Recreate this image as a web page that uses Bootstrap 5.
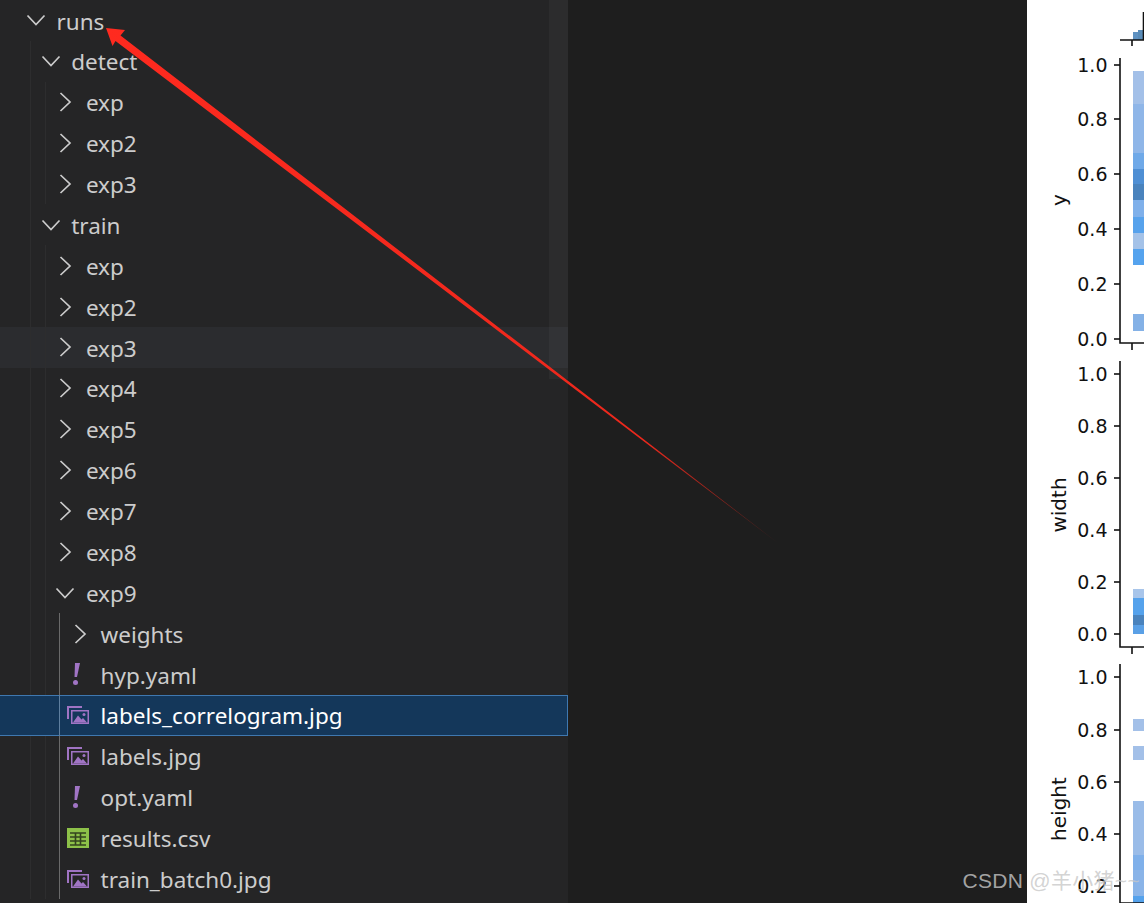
<!DOCTYPE html>
<html lang="en">
  <head>
    <meta charset="UTF-8" />
    <meta name="viewport" content="width=device-width, initial-scale=1.0" />
    <title>runs</title>
    <link href="https://cdn.jsdelivr.net/npm/bootstrap@5.3.2/dist/css/bootstrap.min.css" rel="stylesheet" />
    <style>
      html, body { height: 100%; overflow: hidden; background: #1e1e1e; }
      .shot { height: 903px; }
      .side-tree { width: 568px; background: #252526; font-family: "Noto Sans", sans-serif; font-size: 22.5px; color: #cccccc; }
      .tree-row { height: 40.89px; padding-left: 30px; white-space: nowrap; }
      .tree-row.hovered { background: #2b2c2f; }
      .tree-row.picked { background: #14375a; color: #fff; box-shadow: inset 0 1px 0 #3f78b0, inset 0 -1px 0 #3f78b0, inset -1px 0 0 #3f78b0; }
      .tree-row.picked .guide { border-left-color: transparent; }
      .tree-row.picked .guide.lit { border-left-color: #5f7f9f; }
      .guide { width: 14.7px; height: 100%; flex: none; border-left: 1px solid #2d2d2e; }
      .guide.lit { border-left-color: #6a6a6a; }
      .twistie { width: 26.5px; flex: none; }
      .twistie svg { display: block; margin-left: -4px; }
      .twistie.for-file svg { margin-left: -7px; }
      .row-name { position: relative; top: 1px; }
      .scroll-strip { left: 549px; top: 0; width: 19px; height: 379px; background: rgba(255,255,255,.035); }
      .plot-side { width: 117px; background: #fff; }
      .plot-side text { font-family: "DejaVu Sans", sans-serif; font-size: 19px; fill: #111; }
      .plot-side text.axis-name { font-size: 20px; }
      .arrow-over { left: 0; top: 0; pointer-events: none; }
      .watermark { right: 4px; bottom: 7px; font-family: "Liberation Sans", "Noto Sans CJK SC", sans-serif; font-size: 21px; letter-spacing: .3px; color: rgba(200,200,200,.8); white-space: nowrap; }
    </style>
  </head>
  <body>
    <div class="shot d-flex position-relative overflow-hidden">
      <div id="tree" class="side-tree position-relative flex-shrink-0">
        <div class="scroll-strip position-absolute"></div>
      </div>
      <div class="flex-grow-1"></div>
      <div class="plot-side flex-shrink-0">
        <svg id="plots" width="117" height="903" viewBox="1027 0 117 903" class="d-block"></svg>
      </div>

      <svg class="arrow-over position-absolute" width="1144" height="903">
        <defs>
          <linearGradient id="arrowFade" gradientUnits="userSpaceOnUse" x1="106" y1="28" x2="778" y2="543">
            <stop offset="0" stop-color="#ff2a1f" />
            <stop offset="0.8" stop-color="#ec281c" />
            <stop offset="1" stop-color="#4a1f1c" />
          </linearGradient>
        </defs>
        <path d="M106 28 L125 30 L120.5 35.5 L778 543 L115.5 41 L112.5 46 Z" fill="url(#arrowFade)" />
      </svg>

      <div class="watermark position-absolute">CSDN @羊小猪~~</div>
    </div>

    <script>
      const chevronDown = '<svg width="20" height="20" viewBox="0 0 20 20"><path d="M1.5 5.5 L10 14.5 L18.5 5.5" fill="none" stroke="#cccccc" stroke-width="1.7"/></svg>';
      const chevronRight = '<svg width="20" height="20" viewBox="0 0 20 20"><path d="M5.5 1 L15 10 L5.5 19" fill="none" stroke="#cccccc" stroke-width="1.7"/></svg>';
      const imageIcon = '<svg width="22" height="18" viewBox="0 0 22 18"><path d="M0 0H15V2H2V13H0Z" fill="#a074c4"/><path fill-rule="evenodd" d="M4 4H22V18H4ZM5.5 5.5V16.5H20.5V5.5Z" fill="#a074c4"/><path d="M6 16.5 L11 9.5 L14.5 13.5 L16 12 L20 16.5Z" fill="#a074c4"/><circle cx="17" cy="8.5" r="1.5" fill="#a074c4"/></svg>';
      const yamlIcon = '<svg width="22" height="22" viewBox="0 0 22 22"><path d="M8 0H13L10 14H7.5Z" fill="#a074c4"/><circle cx="8.5" cy="19.5" r="2.5" fill="#a074c4"/></svg>';
      const csvIcon = '<svg width="22" height="20" viewBox="0 0 22 20"><rect width="22" height="20" fill="#8dc149"/><path d="M3 5H19M3 9H19M3 13H19M3 17H19M8.5 5V17M13.5 5V17" stroke="#33431f" stroke-width="1.6" fill="none"/></svg>';

      // depth, name, type: open / closed / image / yaml / csv
      const rows = [
        [0, "runs", "open"], [1, "detect", "open"], [2, "exp", "closed"], [2, "exp2", "closed"], [2, "exp3", "closed"],
        [1, "train", "open"], [2, "exp", "closed"], [2, "exp2", "closed"], [2, "exp3", "closed"], [2, "exp4", "closed"],
        [2, "exp5", "closed"], [2, "exp6", "closed"], [2, "exp7", "closed"], [2, "exp8", "closed"], [2, "exp9", "open"],
        [3, "weights", "closed"], [3, "hyp.yaml", "yaml"], [3, "labels_correlogram.jpg", "image"], [3, "labels.jpg", "image"],
        [3, "opt.yaml", "yaml"], [3, "results.csv", "csv"], [3, "train_batch0.jpg", "image"],
      ];
      const tree = document.getElementById("tree");
      rows.forEach(([depth, name, type], i) => {
        let guides = "";
        for (let g = 0; g < depth; g++) {
          guides += `<span class="guide${g === 2 ? " lit" : ""}"></span>`;
        }
        let lead;
        if (type === "open") lead = `<span class="twistie">${chevronDown}</span>`;
        else if (type === "closed") lead = `<span class="twistie">${chevronRight}</span>`;
        else {
          const icon = type === "image" ? imageIcon : type === "yaml" ? yamlIcon : csvIcon;
          lead = `<span class="twistie for-file d-flex">${icon}</span>`;
        }
        const row = document.createElement("div");
        row.className = "tree-row d-flex align-items-center" + (i === 8 ? " hovered" : "") + (i === 17 ? " picked" : "");
        row.innerHTML = `${guides}${lead}<span class="row-name">${name}</span>`;
        tree.appendChild(row);
      });

      // plot strip, drawn in page coordinates
      const plots = [
        { top: 58, bottom: 343, ticks: [65, 119, 174, 229, 284, 339], label: "y", labelY: 200, bars: [
          [71, 104, "#a3c0e8"], [104, 153, "#8fb6e8"], [153, 169, "#6fa9e8"], [169, 184, "#4f8fd4"], [184, 200, "#4a83bd"],
          [200, 217, "#7fb0ea"], [217, 233, "#57a2ec"], [233, 249, "#a4c2e8"], [249, 265, "#55a3ee"], [314, 331, "#84b1e6"] ] },
        { top: 361, bottom: 647, ticks: [374, 426, 478, 530, 582, 634], label: "width", labelY: 505, bars: [
          [589, 598, "#a8c5ea"], [598, 615, "#55a2ec"], [615, 625, "#4a83bd"], [625, 634, "#5aa0e6"] ] },
        { top: 664, bottom: 903, ticks: [677, 730, 782, 834, 886], label: "height", labelY: 809, bars: [
          [719, 731, "#a3c0e8"], [746, 760, "#a3c0e8"], [801, 855, "#9abce8"], [855, 870, "#7fb0ea"], [870, 896, "#8ab4e8"], [896, 903, "#55a2ec"] ] },
      ];
      const values = ["1.0", "0.8", "0.6", "0.4", "0.2", "0.0"];
      let svg = '<rect x="1133" y="32" width="5" height="8" fill="#5f92c2"/><rect x="1138" y="30" width="6" height="10" fill="#5a8cb8"/><path d="M1143.5 12V40M1120 40H1144M1132 40V46" stroke="#111" stroke-width="1.6" fill="none"/>';
      plots.forEach((p) => {
        p.bars.forEach(([a, b, c]) => {
          svg += `<rect x="1133" y="${a}" width="11" height="${b - a}" fill="${c}"/>`;
        });
        svg += `<path d="M1120 ${p.top}V${p.bottom}H1144M1132 ${p.bottom}V${p.bottom + 7}" stroke="#111" stroke-width="1.6" fill="none"/>`;
        p.ticks.forEach((y, i) => {
          svg += `<path d="M1114 ${y}H1120" stroke="#111" stroke-width="1.6"/>`;
          svg += `<text x="1107.5" y="${y + 7}" text-anchor="end">${values[i]}</text>`;
        });
        svg += `<text class="axis-name" transform="translate(1066 ${p.labelY}) rotate(-90)" text-anchor="middle">${p.label}</text>`;
      });
      document.getElementById("plots").innerHTML = svg;
    </script>
    <script src="https://cdn.jsdelivr.net/npm/bootstrap@5.3.2/dist/js/bootstrap.bundle.min.js"></script>
  </body>
</html>
